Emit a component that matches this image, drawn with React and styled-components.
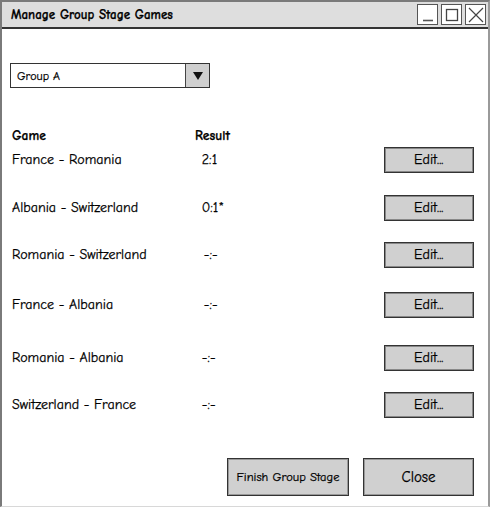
import React from "react";
import styled, { createGlobalStyle } from "styled-components";

const games = [
  { name: "France - Romania", result: "2:1", shift: 0, top: 0 },
  { name: "Albania - Switzerland", result: "0:1*", shift: 0, top: 0 },
  { name: "Romania - Switzerland", result: "-:-", shift: 2, top: -1 },
  { name: "France - Albania", result: "-:-", shift: 2, top: 2 },
  { name: "Romania - Albania", result: "-:-", shift: 0, top: 5 },
  { name: "Switzerland - France", result: "-:-", shift: 0, top: -1 },
];

function App() {
  return (
    <>
      <GlobalStyle />
      <Window>
        <TitleBar>
          <Title>Manage Group Stage Games</Title>
          <Controls>
            <CtrlButton>
              <svg width="18" height="18" viewBox="0 0 18 18">
                <path d="M4 14.5h10" stroke="#555" strokeWidth="1.6" />
              </svg>
            </CtrlButton>
            <CtrlButton>
              <svg width="18" height="18" viewBox="0 0 18 18">
                <rect x="3.5" y="3.5" width="11" height="11" fill="none" stroke="#444" strokeWidth="1.3" />
              </svg>
            </CtrlButton>
            <CtrlButton>
              <svg width="18" height="18" viewBox="0 0 18 18">
                <path d="M2 2L16 16M16 2L2 16" stroke="#444" strokeWidth="1.2" />
              </svg>
            </CtrlButton>
          </Controls>
        </TitleBar>
        <Body>
          <Select>
            <SelectValue>Group A</SelectValue>
            <SelectArrow>
              <svg width="10" height="8" viewBox="0 0 10 8">
                <path d="M0 0H10L5 8Z" fill="#111" />
              </svg>
            </SelectArrow>
          </Select>
          <Table>
            <HeaderRow>
              <GameCell>Game</GameCell>
              <ResultCell>Result</ResultCell>
            </HeaderRow>
            {games.map((g, idx) => (
              <Row key={idx} first={idx === 0} top={g.top}>
                <GameCell as="span" plain>
                  {g.name}
                </GameCell>
                <ResultCell as="span" plain shift={g.shift}>
                  {g.result}
                </ResultCell>
                <EditButton>Edit...</EditButton>
              </Row>
            ))}
          </Table>
          <Footer>
            <FooterButton width="122px">Finish Group Stage</FooterButton>
            <FooterButton width="111px" big>
              Close
            </FooterButton>
          </Footer>
        </Body>
      </Window>
    </>
  );
}

export default App;

const GlobalStyle = createGlobalStyle`
  body {
    margin: 0;
    background: #fff;
    font-family: "Comic Sans MS", "Comic Neue", "DejaVu Sans", sans-serif;
    -webkit-text-stroke: 0.25px #000;
  }
`;

const Window = styled.div`
  width: 490px;
  height: 507px;
  box-sizing: border-box;
  border: 2px solid #7a7a7a;
  border-bottom: 1px solid #d8d8d8;
  border-right-color: #9a9a9a;
  display: flex;
  flex-direction: column;
  overflow: hidden;
`;

const TitleBar = styled.div`
  height: 25px;
  background: #dedede;
  border-bottom: 2px solid #333;
  display: flex;
  align-items: center;
  justify-content: space-between;
  padding: 0 1px 0 9px;
`;

const Title = styled.div`
  font-size: 13px;
  font-weight: bold;
  color: #000;
`;

const Controls = styled.div`
  display: flex;
  gap: 3px;
  align-self: flex-start;
  margin-top: 2px;
  margin-right: 1px;
`;

const CtrlButton = styled.div`
  width: 21px;
  height: 21px;
  box-sizing: border-box;
  border: 1px solid #555;
  background: #fff;
  display: flex;
  align-items: center;
  justify-content: center;
`;

const Body = styled.div`
  flex: 1;
  padding: 34px 14px 0 8px;
  display: flex;
  flex-direction: column;
`;

const Select = styled.div`
  width: 200px;
  height: 25px;
  box-sizing: border-box;
  border: 1px solid #333;
  display: flex;
`;

const SelectValue = styled.div`
  flex: 1;
  font-size: 12px;
  padding-left: 6px;
  display: flex;
  align-items: center;
  color: #000;
`;

const SelectArrow = styled.div`
  width: 23px;
  border-left: 1px solid #444;
  background: #cfcfcf;
  display: flex;
  align-items: center;
  justify-content: center;
`;

const Table = styled.div`
  margin-top: 39px;
  display: flex;
  flex-direction: column;
`;

const HeaderRow = styled.div`
  display: flex;
  height: 17px;
  align-items: center;
`;

const GameCell = styled.div`
  width: 185px;
  padding-left: 2px;
  color: #000;
  font-size: ${(p) => (p.plain ? "14px" : "13.5px")};
  font-weight: ${(p) => (p.plain ? "normal" : "bold")};
`;

const ResultCell = styled.div`
  width: 189px;
  padding-left: ${(p) => (p.plain ? 6 + (p.shift || 0) : 0)}px;
  margin-left: ${(p) => (p.plain ? 0 : -2)}px;
  box-sizing: border-box;
  color: #000;
  font-size: ${(p) => (p.plain ? "14px" : "13.5px")};
  font-weight: ${(p) => (p.plain ? "normal" : "bold")};
`;

const Row = styled.div`
  display: flex;
  align-items: center;
  height: 27px;
  margin-top: ${(p) => (p.first ? 2 : 21 + p.top)}px;
`;

const EditButton = styled.button`
  width: 91px;
  height: 26px;
  box-sizing: border-box;
  border: 1px solid #333;
  box-shadow: inset 0 0 0 1px #888;
  background: #d0d0d0;
  font-family: inherit;
  font-size: 14px;
  color: #000;
  padding: 0;
`;

const Footer = styled.div`
  margin-top: auto;
  margin-bottom: 10px;
  display: flex;
  justify-content: flex-end;
  gap: 14px;
`;

const FooterButton = styled.button`
  width: ${(p) => p.width};
  height: 38px;
  box-sizing: border-box;
  border: 1px solid #333;
  box-shadow: inset 0 0 0 1px #999;
  background: #d0d0d0;
  font-family: inherit;
  font-size: ${(p) => (p.big ? "15px" : "12.5px")};
  color: #000;
  padding: 0;
`;
